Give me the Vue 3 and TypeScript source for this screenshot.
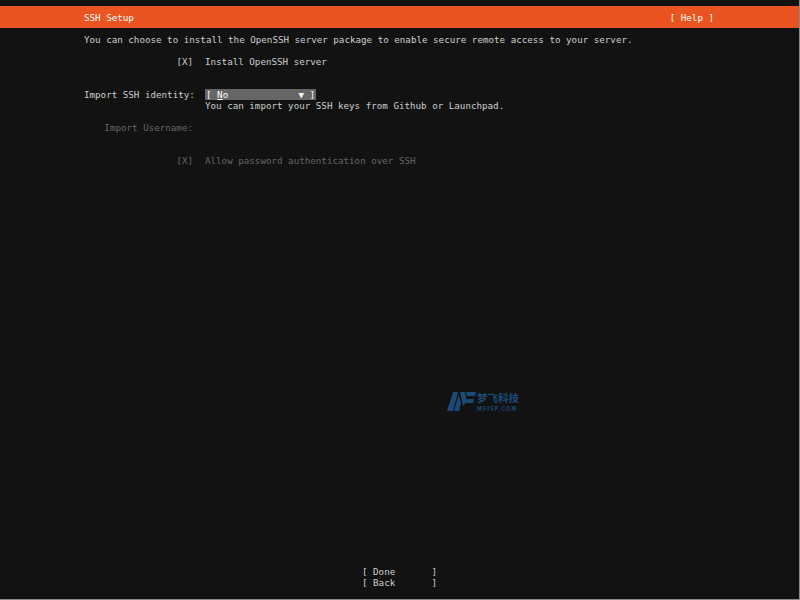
<script setup lang="ts">
const intro = 'You can choose to install the OpenSSH server package to enable secure remote access to your server.'
</script>

<template>
  <div class="screen">
    <header class="title">
      <span>SSH Setup</span>
      <span class="help">[ Help ]</span>
    </header>
    <main class="body">
      <p class="line intro">{{ intro }}</p>
      <div class="row first">
        <span class="label">[X]</span>
        <span>Install OpenSSH server</span>
      </div>
      <div class="row identity">
        <span class="label">Import SSH identity:</span>
        <div>
          <div class="select"><span>[ <u>N</u>o</span><span class="arrow">▼ ]</span></div>
          <div class="line">You can import your SSH keys from Github or Launchpad.</div>
        </div>
      </div>
      <div class="row dim username">
        <span class="label">Import Username:</span>
      </div>
      <div class="row dim password">
        <span class="label">[X]</span>
        <span>Allow password authentication over SSH</span>
      </div>
    </main>
    <div class="mark">
      <svg width="29" height="20" viewBox="0 0 29 20" aria-hidden="true">
        <path d="M0 20 6 1h5L6 20zM7 20 11.5 4l2.5 8-2 8zM13 1h5l2 9-4 5zM19 1h10l-1 4H20zM20 8h7l-1 4h-7z" fill="#1b4a78" />
      </svg>
      <div class="mark-text">
        <span class="mark-cn">梦飞科技</span>
        <span class="mark-en">MFISP.COM</span>
      </div>
    </div>
    <footer class="actions">
      <div class="button"><span>[ Done</span><span>]</span></div>
      <div class="button"><span>[ Back</span><span>]</span></div>
    </footer>
  </div>
</template>

<style scoped>
.screen {
  position: relative;
  display: flex;
  flex-direction: column;
  box-sizing: border-box;
  width: 800px;
  height: 600px;
  padding-top: 6px;
  overflow: hidden;
  background: #121212;
  border-right: 1px solid #8a8a8a;
  border-bottom: 1px solid #8a8a8a;
  color: #d0d0d0;
  font-family: "DejaVu Sans Mono", monospace;
  font-size: 9.21px;
  line-height: 11.1px;
  white-space: pre;
}
.title {
  display: flex;
  justify-content: space-between;
  align-items: center;
  height: 22px;
  padding: 2px 85px 0 84px;
  box-sizing: border-box;
  background: #e95420;
  color: #fff;
}
.body {
  flex: 1;
  padding: 6px 84px 0;
}
.line { margin: 0; }
.row {
  display: flex;
  gap: 12px;
  align-items: flex-start;
}
.label {
  width: 109px;
  flex: none;
  text-align: right;
}
.first { margin-top: 11px; }
.identity { margin-top: 22px; }
.username { margin-top: 11px; }
.password { margin-top: 22px; }
.dim { color: #666; }
.select {
  display: flex;
  justify-content: space-between;
  width: 111px;
  height: 11px;
  padding: 0 1px;
  box-sizing: border-box;
  background: #666;
  color: #fff;
}
.mark {
  position: absolute;
  left: 447px;
  top: 391px;
  display: flex;
  gap: 1px;
  align-items: flex-start;
}
.mark-text {
  display: flex;
  flex-direction: column;
  padding-top: 1px;
  color: #1b4a78;
  font-family: "Noto Sans CJK SC", sans-serif;
  font-weight: 700;
}
.mark-cn { height: 12px; font-size: 10.5px; line-height: 12px; }
.mark-en { height: 7px; margin-top: 1px; font-size: 6px; line-height: 7px; letter-spacing: .8px; }
.actions {
  align-self: center;
  width: 75px;
  margin: 0 0 11px;
}
.button {
  display: flex;
  justify-content: space-between;
}
</style>
